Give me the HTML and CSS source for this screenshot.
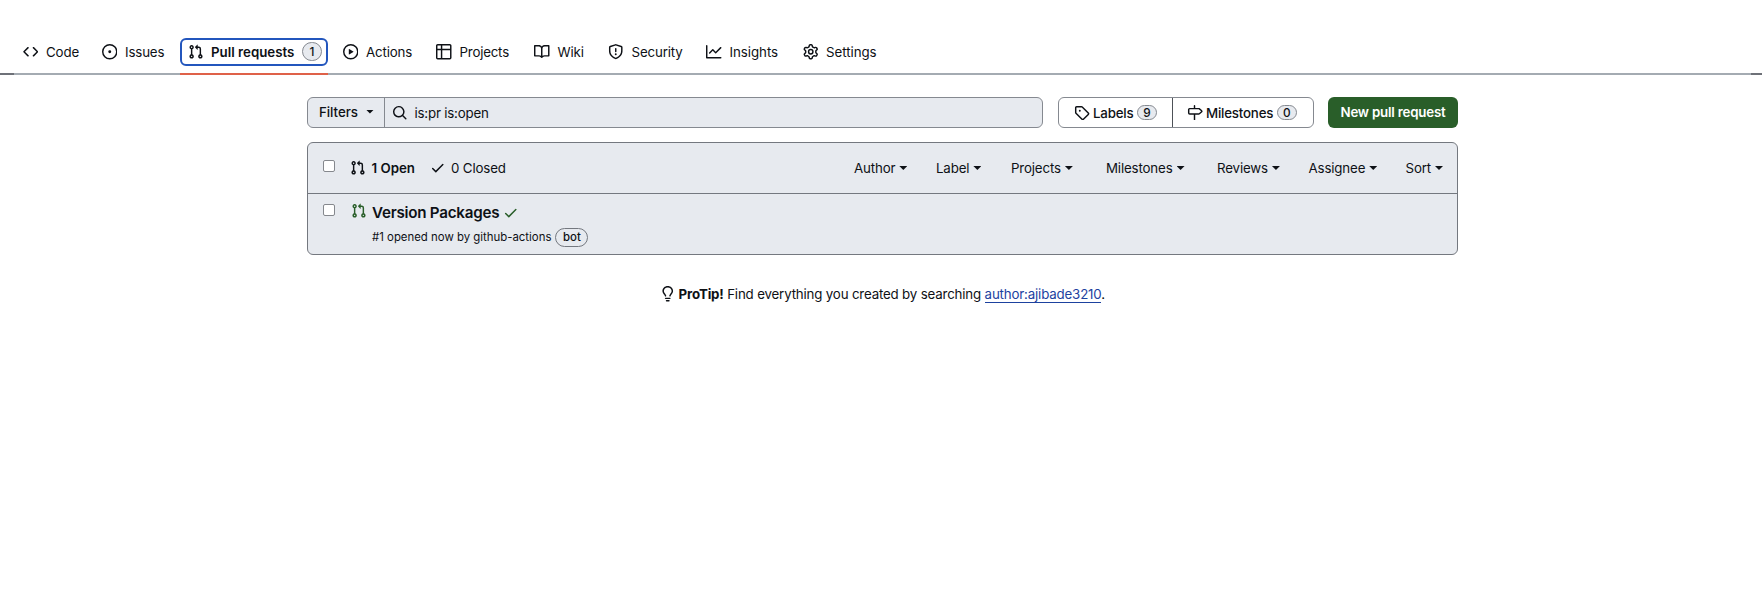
FILE: index.html
```html
<!DOCTYPE html>
<html lang="en">
<head>
<meta charset="utf-8">
<title>Pull requests</title>
<link rel="stylesheet" href="styles.css">
</head>
<body>
<svg class="defs" width="0" height="0">
  <symbol id="pr" viewBox="0 0 16 16"><path d="M1.5 3.25a2.25 2.25 0 1 1 3 2.122v5.256a2.251 2.251 0 1 1-1.5 0V5.372A2.25 2.25 0 0 1 1.5 3.25Zm5.677-.177L9.573.677A.25.25 0 0 1 10 .854V2.5h1A2.5 2.5 0 0 1 13.5 5v5.628a2.251 2.251 0 1 1-1.5 0V5a1 1 0 0 0-1-1h-1v1.646a.25.25 0 0 1-.427.177L7.177 3.427a.25.25 0 0 1 0-.354ZM3.75 2.5a.75.75 0 1 0 0 1.5.75.75 0 0 0 0-1.5Zm0 9.5a.75.75 0 1 0 0 1.5.75.75 0 0 0 0-1.5Zm8.25.75a.75.75 0 1 0 1.5 0 .75.75 0 0 0-1.5 0Z"/></symbol>
  <symbol id="check" viewBox="0 0 16 16"><path d="M13.78 4.22a.75.75 0 0 1 0 1.06l-7.25 7.25a.75.75 0 0 1-1.06 0L2.22 9.28a.751.751 0 0 1 .018-1.042.751.751 0 0 1 1.042-.018L6 10.94l6.72-6.72a.75.75 0 0 1 1.06 0Z"/></symbol>
</svg>
<nav class="tabs">
  <a class="tab"><svg class="icon" viewBox="0 0 16 16"><path d="m11.28 3.22 4.25 4.25a.75.75 0 0 1 0 1.06l-4.25 4.25a.749.749 0 0 1-1.275-.326.749.749 0 0 1 .215-.734L13.94 8l-3.72-3.72a.749.749 0 0 1 .326-1.275.749.749 0 0 1 .734.215Zm-6.56 0a.751.751 0 0 1 1.042.018.751.751 0 0 1 .018 1.042L2.06 8l3.72 3.72a.749.749 0 0 1-.326 1.275.749.749 0 0 1-.734-.215L.47 8.53a.75.75 0 0 1 0-1.06Z"/></svg><span>Code</span></a>
  <a class="tab"><svg class="icon" viewBox="0 0 16 16"><path d="M8 9.5a1.5 1.5 0 1 0 0-3 1.5 1.5 0 0 0 0 3Z"/><path d="M8 0a8 8 0 1 1 0 16A8 8 0 0 1 8 0ZM1.5 8a6.5 6.5 0 1 0 13 0 6.5 6.5 0 0 0-13 0Z"/></svg><span>Issues</span></a>
  <a class="tab current"><span class="focus"><svg class="icon"><use href="#pr"/></svg><span>Pull requests</span><span class="count round">1</span></span></a>
  <a class="tab"><svg class="icon" viewBox="0 0 16 16"><path d="M8 0a8 8 0 1 1 0 16A8 8 0 0 1 8 0ZM1.5 8a6.5 6.5 0 1 0 13 0 6.5 6.5 0 0 0-13 0Zm4.879-2.773 4.264 2.559a.25.25 0 0 1 0 .428l-4.264 2.559A.25.25 0 0 1 6 10.559V5.442a.25.25 0 0 1 .379-.215Z"/></svg><span>Actions</span></a>
  <a class="tab"><svg class="icon" viewBox="0 0 16 16"><path d="M0 1.75C0 .784.784 0 1.75 0h12.5C15.216 0 16 .784 16 1.75v12.5A1.75 1.75 0 0 1 14.25 16H1.75A1.75 1.75 0 0 1 0 14.25ZM6.5 6.5v8h7.75a.25.25 0 0 0 .25-.25V6.5Zm8-1.5V1.75a.25.25 0 0 0-.25-.25H6.5V5Zm-13 1.5v7.75c0 .138.112.25.25.25H5v-8ZM5 5V1.5H1.75a.25.25 0 0 0-.25.25V5Z"/></svg><span>Projects</span></a>
  <a class="tab"><svg class="icon" viewBox="0 0 16 16"><path d="M0 1.75A.75.75 0 0 1 .75 1h4.253c1.227 0 2.317.59 3 1.501A3.743 3.743 0 0 1 11.006 1h4.245a.75.75 0 0 1 .75.75v10.5a.75.75 0 0 1-.75.75h-4.507a2.25 2.25 0 0 0-1.591.659l-.622.621a.75.75 0 0 1-1.06 0l-.622-.621A2.25 2.25 0 0 0 5.258 13H.75a.75.75 0 0 1-.75-.75Zm7.251 10.324.004-5.073-.002-2.253A2.25 2.25 0 0 0 5.003 2.5H1.5v9h3.757a3.75 3.75 0 0 1 1.994.574ZM8.755 4.75l-.004 7.322a3.752 3.752 0 0 1 1.992-.572H14.5v-9h-3.495a2.25 2.25 0 0 0-2.25 2.25Z"/></svg><span>Wiki</span></a>
  <a class="tab"><svg class="icon" viewBox="0 0 16 16"><path d="M7.467.133a1.748 1.748 0 0 1 1.066 0l5.25 1.68A1.75 1.75 0 0 1 15 3.48V7c0 1.566-.32 3.182-1.303 4.682-.983 1.498-2.585 2.813-5.032 3.855a1.697 1.697 0 0 1-1.33 0c-2.447-1.042-4.049-2.357-5.032-3.855C1.32 10.182 1 8.566 1 7V3.48a1.75 1.75 0 0 1 1.217-1.667Zm.61 1.429a.25.25 0 0 0-.153 0l-5.25 1.68a.25.25 0 0 0-.174.238V7c0 1.358.275 2.666 1.057 3.86.784 1.194 2.121 2.34 4.366 3.297a.196.196 0 0 0 .154 0c2.245-.956 3.582-2.104 4.366-3.298C13.225 9.666 13.5 8.36 13.5 7V3.48a.251.251 0 0 0-.174-.237l-5.25-1.68ZM8.75 4.75v3a.75.75 0 0 1-1.5 0v-3a.75.75 0 0 1 1.5 0ZM9 10.5a1 1 0 1 1-2 0 1 1 0 0 1 2 0Z"/></svg><span>Security</span></a>
  <a class="tab"><svg class="icon" viewBox="0 0 16 16"><path d="M1.5 1.75V13.5h13.75a.75.75 0 0 1 0 1.5H.75a.75.75 0 0 1-.75-.75V1.75a.75.75 0 0 1 1.5 0Zm14.28 2.53-5.25 5.25a.75.75 0 0 1-1.06 0L7 7.06 4.28 9.78a.751.751 0 0 1-1.042-.018.751.751 0 0 1-.018-1.042l3.25-3.25a.75.75 0 0 1 1.06 0L10 7.94l4.72-4.72a.751.751 0 0 1 1.042.018.751.751 0 0 1 .018 1.042Z"/></svg><span>Insights</span></a>
  <a class="tab"><svg class="icon" viewBox="0 0 16 16"><path d="M8 0a8.2 8.2 0 0 1 .701.031C9.444.095 9.99.645 10.16 1.29l.288 1.107c.018.066.079.158.212.224.231.114.454.243.668.386.123.082.233.09.299.071l1.103-.303c.644-.176 1.392.021 1.82.63.27.385.506.792.704 1.218.315.675.111 1.422-.364 1.891l-.814.806c-.049.048-.098.147-.088.294.016.257.016.515 0 .772-.01.147.038.246.088.294l.814.806c.475.469.679 1.216.364 1.891a7.977 7.977 0 0 1-.704 1.217c-.428.61-1.176.807-1.82.63l-1.102-.302c-.067-.019-.177-.011-.3.071a5.909 5.909 0 0 1-.668.386c-.133.066-.194.158-.211.224l-.29 1.106c-.168.646-.715 1.196-1.458 1.26a8.006 8.006 0 0 1-1.402 0c-.743-.064-1.289-.614-1.458-1.26l-.289-1.106c-.018-.066-.079-.158-.212-.224a5.738 5.738 0 0 1-.668-.386c-.123-.082-.233-.09-.299-.071l-1.103.303c-.644.176-1.392-.021-1.82-.63a8.12 8.12 0 0 1-.704-1.218c-.315-.675-.111-1.422.363-1.891l.815-.806c.05-.048.098-.147.088-.294a6.214 6.214 0 0 1 0-.772c.01-.147-.038-.246-.088-.294l-.815-.806C.635 6.045.431 5.298.746 4.623a7.92 7.92 0 0 1 .704-1.217c.428-.61 1.176-.807 1.82-.63l1.102.302c.067.019.177.011.3-.071.214-.143.437-.272.668-.386.133-.066.194-.158.211-.224l.29-1.106C6.009.645 6.556.095 7.299.03 7.53.01 7.764 0 8 0Zm-.571 1.525c-.036.003-.108.036-.137.146l-.289 1.105c-.147.561-.549.967-.998 1.189-.173.086-.34.183-.5.29-.417.278-.97.423-1.529.27l-1.103-.303c-.109-.03-.175.016-.195.045-.22.312-.412.644-.573.99-.014.031-.021.11.059.19l.815.806c.411.406.562.957.53 1.456a4.709 4.709 0 0 0 0 .582c.032.499-.119 1.05-.53 1.456l-.815.806c-.081.08-.073.159-.059.19.162.346.353.677.573.989.02.03.085.076.195.046l1.102-.303c.56-.153 1.113-.008 1.53.27.161.107.328.204.501.29.447.222.85.629.997 1.189l.289 1.105c.029.109.101.143.137.146a6.6 6.6 0 0 0 1.142 0c.036-.003.108-.036.137-.146l.289-1.105c.147-.561.549-.967.998-1.189.173-.086.34-.183.5-.29.417-.278.97-.423 1.529-.27l1.103.303c.109.029.175-.016.195-.045.22-.313.411-.644.573-.99.014-.031.021-.11-.059-.19l-.815-.806c-.411-.406-.562-.957-.53-1.456a4.709 4.709 0 0 0 0-.582c-.032-.499.119-1.05.53-1.456l.815-.806c.081-.08.073-.159.059-.19a6.464 6.464 0 0 0-.573-.989c-.02-.03-.085-.076-.195-.046l-1.102.303c-.56.153-1.113.008-1.53-.27a4.44 4.44 0 0 0-.501-.29c-.447-.222-.85-.629-.997-1.189l-.289-1.105c-.029-.11-.101-.143-.137-.146a6.6 6.6 0 0 0-1.142 0ZM11 8a3 3 0 1 1-6 0 3 3 0 0 1 6 0ZM9.5 8a1.5 1.5 0 1 0-3.001.001A1.5 1.5 0 0 0 9.5 8Z"/></svg><span>Settings</span></a>
</nav>
<main class="content">
  <div class="toolbar">
    <div class="search">
      <button class="filters">Filters<i class="caret"></i></button>
      <div class="query"><svg class="icon" viewBox="0 0 16 16"><path d="M10.68 11.74a6 6 0 0 1-7.922-8.982 6 6 0 0 1 8.982 7.922l3.04 3.04a.749.749 0 0 1-.326 1.275.749.749 0 0 1-.734-.215ZM11.5 7a4.499 4.499 0 1 0-8.997 0A4.499 4.499 0 0 0 11.5 7Z"/></svg><span>is:pr is:open</span></div>
    </div>
    <div class="group">
      <a class="labels"><svg class="icon" viewBox="0 0 16 16"><path d="M1 7.775V2.75C1 1.784 1.784 1 2.75 1h5.025c.464 0 .91.184 1.238.513l6.25 6.25a1.75 1.75 0 0 1 0 2.474l-5.026 5.026a1.75 1.75 0 0 1-2.474 0l-6.25-6.25A1.752 1.752 0 0 1 1 7.775Zm1.5 0c0 .066.026.13.073.177l6.25 6.25a.25.25 0 0 0 .354 0l5.025-5.025a.25.25 0 0 0 0-.354l-6.25-6.25a.25.25 0 0 0-.177-.073H2.75a.25.25 0 0 0-.25.25ZM6 5a1 1 0 1 1 0 2 1 1 0 0 1 0-2Z"/></svg><span>Labels</span><span class="count">9</span></a>
      <a class="milestones"><svg class="icon" viewBox="0 0 16 16"><path d="M7.75 0a.75.75 0 0 1 .75.75V3h3.634c.414 0 .814.147 1.13.414l2.07 1.75a1.75 1.75 0 0 1 0 2.672l-2.07 1.75a1.75 1.75 0 0 1-1.13.414H8.5v5.25a.75.75 0 0 1-1.5 0V10H2.75A1.75 1.75 0 0 1 1 8.25v-3.5C1 3.784 1.784 3 2.75 3H7V.75A.75.75 0 0 1 7.75 0Zm4.384 8.5a.25.25 0 0 0 .161-.06l2.07-1.75a.248.248 0 0 0 0-.38l-2.07-1.75a.25.25 0 0 0-.161-.06H2.75a.25.25 0 0 0-.25.25v3.5c0 .138.112.25.25.25h9.384Z"/></svg><span>Milestones</span><span class="count">0</span></a>
    </div>
    <button class="primary">New pull request</button>
  </div>
  <section class="list">
    <header class="list-head">
      <i class="box"></i>
      <svg class="icon"><use href="#pr"/></svg><b class="open">1 Open</b>
      <svg class="icon"><use href="#check"/></svg><span class="closed">0 Closed</span>
      <div class="menus"><span>Author<i class="caret"></i></span><span>Label<i class="caret"></i></span><span>Projects<i class="caret"></i></span><span>Milestones<i class="caret"></i></span><span>Reviews<i class="caret"></i></span><span>Assignee<i class="caret"></i></span><span>Sort<i class="caret"></i></span></div>
    </header>
    <article class="row">
      <i class="box"></i>
      <svg class="icon green"><use href="#pr"/></svg>
      <div class="details">
        <div class="title"><span>Version Packages</span><svg class="icon green"><use href="#check"/></svg></div>
        <div class="meta"><span>#1 opened now by github-actions</span><span class="bot">bot</span></div>
      </div>
    </article>
  </section>
  <p class="protip"><svg class="icon" viewBox="0 0 16 16"><path d="M8 1.5c-2.363 0-4 1.69-4 3.75 0 .984.424 1.625.984 2.304l.214.253c.223.264.47.556.673.848.284.411.537.896.621 1.49a.75.75 0 0 1-1.484.211c-.04-.282-.163-.547-.37-.847a8.456 8.456 0 0 0-.542-.68c-.084-.1-.173-.205-.268-.32C3.201 7.75 2.5 6.766 2.5 5.25 2.5 2.31 4.863 0 8 0s5.5 2.31 5.5 5.25c0 1.516-.701 2.5-1.328 3.259-.095.115-.184.22-.268.319-.207.245-.383.453-.541.681-.208.3-.33.565-.37.847a.751.751 0 0 1-1.485-.212c.084-.593.337-1.078.621-1.489.203-.292.45-.584.673-.848.075-.088.147-.173.213-.253.561-.679.985-1.32.985-2.304 0-2.06-1.637-3.75-4-3.75ZM5.75 12h4.5a.75.75 0 0 1 0 1.5h-4.5a.75.75 0 0 1 0-1.5ZM6 15.25a.75.75 0 0 1 .75-.75h2.5a.75.75 0 0 1 0 1.5h-2.5a.75.75 0 0 1-.75-.75Z"/></svg><span><b>ProTip!</b> Find everything you created by searching <a>author:ajibade3210</a>.</span></p>
</main>
</body>
</html>
```
FILE: styles.css
```css
* { box-sizing: border-box; }
body { margin: 0; background: #fff; color: #0e1116; font: 13.3px/20px Inter, "Liberation Sans", sans-serif; letter-spacing: -0.15px; }
a { color: inherit; }
button { font: inherit; letter-spacing: inherit; color: inherit; }
.defs { position: absolute; }
.icon { width: 15.5px; height: 15.5px; fill: currentColor; flex: none; display: block; }
.caret { display: block; width: 8px; height: 4px; background: #0e1116; clip-path: polygon(0 0, 100% 0, 50% 100%); }

.tabs { display: grid; grid-template-columns: 79px 78.5px 162.5px 93.5px 98px 74px 98px 96.5px 90px; height: 75px; padding: 30px 0 0 22.5px; border-bottom: 2px solid #a4abb2; border-image: linear-gradient(to right, #6e7178 15px, #a4abb2 15px, #a4abb2 calc(100% - 12px), #6e7178 calc(100% - 12px)) 1; white-space: nowrap; }
.tab { display: flex; align-items: center; gap: 8px; height: 45px; padding-bottom: 1px; }
.tab:nth-child(5) { letter-spacing: -0.2px; }
.tab:nth-child(n+8) { letter-spacing: -0.05px; }
.tab.current { width: 148px; padding-bottom: 0; border-bottom: 2px solid #df6149; font-weight: 600; letter-spacing: 0; }
.focus { display: flex; align-items: center; width: 148px; height: 28px; padding-left: 6px; gap: 7.5px; border: 2px solid #2356bd; border-radius: 6px; }
.count { display: flex; align-items: center; justify-content: center; width: 20px; height: 15px; border: 1px solid #858990; border-radius: 10px; background: #e7eaef; font-size: 11.8px; font-weight: 500; letter-spacing: 0; }
.count.round { width: 20px; height: 19px; }

.content { width: 1151px; margin: 22px 0 0 307px; }
.toolbar { display: flex; height: 31px; }
.search { display: flex; width: 736px; border: 1px solid #858990; border-radius: 6px; background: #e7eaef; overflow: hidden; }
.filters { display: flex; align-items: center; gap: 8px; width: 77px; padding: 0 0 2px 11px; border: 0; border-right: 1px solid #858990; background: none; font-weight: 500; letter-spacing: -0.05px; }
.query { display: flex; align-items: center; gap: 7px; padding-left: 7px; letter-spacing: -0.2px; }
.group { display: flex; width: 256px; margin-left: 15px; border: 1px solid #858990; border-radius: 6px; font-weight: 500; white-space: nowrap; }
.group a { display: flex; align-items: center; gap: 3.5px; letter-spacing: -0.2px; }
.group .labels { width: 114px; padding-left: 15px; border-right: 1px solid #4d5157; }
.group .milestones { padding-left: 14px; }
.primary { width: 130px; margin-left: 14px; padding: 0 0 2px; border: 0; border-radius: 6px; background: #295e29; color: #fff; font-weight: 600; letter-spacing: -0.2px; white-space: nowrap; }

.list { margin-top: 14px; border: 1px solid #74787f; border-radius: 6px; background: #e7eaef; height: 113px; }
.list-head { display: flex; align-items: center; height: 51px; padding-left: 15px; border-bottom: 1px solid #74787f; white-space: nowrap; }
.box { width: 12px; height: 12px; border: 1px solid #85888d; border-radius: 2px; background: #fff; flex: none; }
.list-head .box { margin: 0 15px 4px 0; }
.open { width: 52px; margin: 0 6px; font-weight: 600; letter-spacing: 0; }
.closed { margin-left: 6px; }
.menus { display: grid; grid-template-columns: 82px 75px 95px 111px 91.5px 97px 38px; margin-left: auto; padding-right: 13.5px; }
.menus span { display: flex; align-items: center; gap: 4px; }
.row { display: flex; padding: 10px 0 0 15px; }
.row .box { margin-right: 16px; }
.row > .icon { margin-top: -1px; }
.details { margin-left: 5.5px; }
.title { display: flex; align-items: center; gap: 4px; height: 20px; margin-top: -1px; font-size: 15.2px; font-weight: 600; letter-spacing: -0.25px; }
.green { color: #295e29; }
.meta { display: flex; align-items: center; gap: 4px; height: 20px; margin-top: 4px; font-size: 11.4px; letter-spacing: 0; }
.bot { display: flex; align-items: center; justify-content: center; width: 33px; height: 19px; border: 1px solid #74787f; border-radius: 10px; font-weight: 500; }
.protip { display: flex; align-items: center; justify-content: center; gap: 3px; margin: 29px 0 0; letter-spacing: -0.17px; }
.protip b { font-weight: 700; }
.protip a { color: #1d429f; border-bottom: 1.5px solid #1d429f; }
```
